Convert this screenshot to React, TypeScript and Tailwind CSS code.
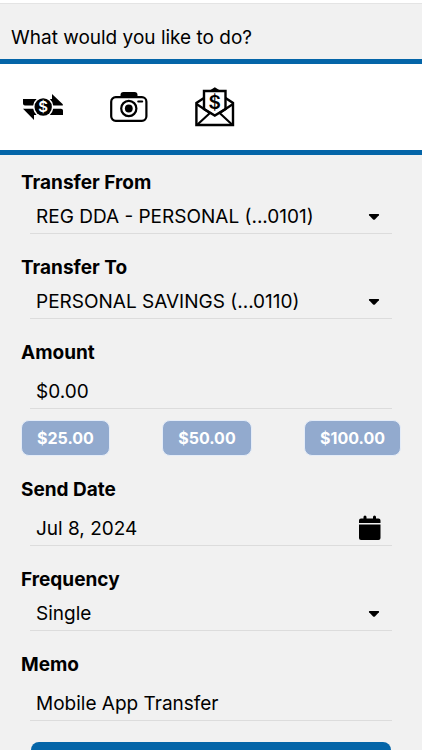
import { useState, type ReactNode } from 'react'

const ACCOUNTS = ['REG DDA - PERSONAL (...0101)', 'PERSONAL SAVINGS (...0110)']
const QUICK_AMOUNTS = ['$25.00', '$50.00', '$100.00']

function TransferIcon() {
  return (
    <svg viewBox="0 0 40 28" className="w-10 h-7" fill="currentColor" aria-hidden="true">
      <path d="M0 6H13.600A10.200 10.200 0 0 0 10.200 12.400H2Q0 12.400 0 10.500Z" />
      <path d="M29 1 39.800 11.200V12.400H30.200A10.200 10.200 0 0 0 26.800 6H29Z" />
      <path d="M0 15.800H10.200A10.200 10.200 0 0 0 13.600 22H11V27Z" />
      <path d="M40 22H26.800A10.200 10.200 0 0 0 30.200 15.800H38Q40 15.800 40 17.600Z" />
      <circle cx="20.200" cy="14" r="8.700" />
      <text x="20.200" y="19.400" textAnchor="middle" fontSize="15" fontWeight="600" fontFamily="Inter, sans-serif" fill="#fff">$</text>
    </svg>
  )
}

function CameraIcon() {
  return (
    <svg viewBox="0 0 38 32" className="w-[38px] h-8" fill="none" stroke="currentColor" aria-hidden="true">
      <path d="M10.500 6V4Q10.500 1 13.500 1H24.500Q27.500 1 27.500 4V6Z" fill="currentColor" stroke="none" />
      <rect x="1.200" y="6.200" width="35.200" height="23.600" rx="4.500" strokeWidth="2.200" />
      <circle cx="18.800" cy="17.500" r="7.600" strokeWidth="2.200" />
      <circle cx="18.800" cy="17.500" r="3.900" fill="currentColor" stroke="none" />
      <path d="M28.200 10.400H32.200" strokeWidth="2" strokeLinecap="round" />
    </svg>
  )
}

function PayBillIcon() {
  return (
    <svg viewBox="0 0 40 40" className="w-10 h-10" fill="none" stroke="currentColor" strokeWidth="2.400" aria-hidden="true">
      <path d="M9 11 1.400 16V38H38V16L30.500 11" />
      <path d="M9 22V4H30.500V22L19.800 28.500Z" />
      <path d="M15.500 3.800 19.800 1.200 24 3.800Z" fill="currentColor" strokeWidth="1.500" />
      <path d="M1.500 17 15 26 2.500 37.500M38 17 24.600 26 37 37.500" strokeWidth="2.200" />
      <text x="19.800" y="22" textAnchor="middle" fontSize="19" fontWeight="600" fontFamily="Inter, sans-serif" fill="currentColor" stroke="none">$</text>
    </svg>
  )
}

function CaretIcon() {
  return (
    <svg viewBox="0 0 12 8" className="w-3 h-2 absolute right-3 top-[13px] pointer-events-none" fill="currentColor" aria-hidden="true">
      <path d="M1.500 1H10.500Q11.600 1.200 10.900 2.300L6.900 6.500Q6 7.200 5.100 6.500L1.100 2.300Q.400 1.200 1.500 1Z" />
    </svg>
  )
}

function CalendarIcon() {
  return (
    <svg viewBox="0 0 24 26" className="w-6 h-[26px]" fill="currentColor" aria-hidden="true">
      <path d="M1 8V5.500Q1 3.500 3 3.500H5.500V2Q5.500 .500 7 .500T8.500 2V3.500H15V2Q15 .500 16.500 .500T18 2V3.500H20.500Q22.500 3.500 22.500 5.500V8Z" />
      <path d="M1 9.500H22.500V23Q22.500 25 20.500 25H3Q1 25 1 23Z" />
    </svg>
  )
}

interface LabelProps {
  htmlFor: string
  children: ReactNode
}

function FieldLabel({ htmlFor, children }: LabelProps) {
  return (
    <label htmlFor={htmlFor} className="block text-[19px] leading-[26px] font-bold">
      {children}
    </label>
  )
}

interface FieldProps {
  id: string
  label: string
  value: string
  onChange: (value: string) => void
}

function SelectField({ id, label, value, onChange, options }: FieldProps & { options: string[] }) {
  return (
    <div>
      <FieldLabel htmlFor={id}>{label}</FieldLabel>
      <div className="relative mt-1 mx-[9px] border-b border-[#dcdcdc]">
        <select
          id={id}
          value={value}
          onChange={(e) => onChange(e.target.value)}
          className="block w-full h-[33px] pt-0.5 pl-1.5 pr-8 appearance-none bg-transparent text-[19px] outline-none"
        >
          {options.map((option) => (
            <option key={option}>{option}</option>
          ))}
        </select>
        <CaretIcon />
      </div>
    </div>
  )
}

function TextField({ id, label, value, onChange, children }: FieldProps & { children?: ReactNode }) {
  return (
    <div>
      <FieldLabel htmlFor={id}>{label}</FieldLabel>
      <div className="flex items-center mt-2 mx-[9px] pr-2.5 border-b border-[#dcdcdc]">
        <input
          id={id}
          type="text"
          value={value}
          onChange={(e) => onChange(e.target.value)}
          className="flex-1 min-w-0 h-[34px] pl-1.5 bg-transparent text-[19px] outline-none"
        />
        {children}
      </div>
    </div>
  )
}

export default function App() {
  const [from, setFrom] = useState(ACCOUNTS[0])
  const [to, setTo] = useState(ACCOUNTS[1])
  const [amount, setAmount] = useState('$0.00')
  const [date, setDate] = useState('Jul 8, 2024')
  const [frequency, setFrequency] = useState('Single')
  const [memo, setMemo] = useState('Mobile App Transfer')

  return (
    <div className="h-screen flex flex-col overflow-hidden bg-[#f1f1f1] text-black font-['Inter','Liberation_Sans',sans-serif]">
      <header className="shrink-0 border-t-3 border-white">
        <h1 className="px-[11px] pt-[21px] pb-2 border-t border-[#e4e4e4] text-[19px] leading-[26px]">
          What would you like to do?
        </h1>
      </header>

      <nav className="shrink-0 flex items-center gap-[47px] h-24 px-[23px] bg-white border-y-5 border-[#0465a8]">
        <button type="button" aria-label="Transfer">
          <TransferIcon />
        </button>
        <button type="button" aria-label="Deposit">
          <CameraIcon />
        </button>
        <button type="button" aria-label="Pay bills">
          <PayBillIcon />
        </button>
      </nav>

      <form
        onSubmit={(e) => e.preventDefault()}
        className="flex-1 min-h-0 overflow-y-auto [scrollbar-width:none] flex flex-col gap-[21px] px-[21px] pt-[15px] pb-6"
      >
        <SelectField id="from" label="Transfer From" value={from} onChange={setFrom} options={ACCOUNTS} />
        <SelectField id="to" label="Transfer To" value={to} onChange={setTo} options={ACCOUNTS} />

        <div>
          <TextField id="amount" label="Amount" value={amount} onChange={setAmount} />
          <div className="flex justify-between mt-[11px]">
            {QUICK_AMOUNTS.map((quick) => (
              <button
                key={quick}
                type="button"
                onClick={() => setAmount(quick)}
                className="h-9 px-[15px] rounded-lg border border-[#e4ecf8] bg-[#92aace] text-white text-base font-bold"
              >
                {quick}
              </button>
            ))}
          </div>
        </div>

        <TextField id="date" label="Send Date" value={date} onChange={setDate}>
          <button type="button" aria-label="Choose date">
            <CalendarIcon />
          </button>
        </TextField>
        <SelectField
          id="frequency"
          label="Frequency"
          value={frequency}
          onChange={setFrequency}
          options={['Single', 'Weekly', 'Monthly']}
        />
        <TextField id="memo" label="Memo" value={memo} onChange={setMemo} />

        <button type="submit" aria-label="Submit" className="shrink-0 h-12 mx-2.5 rounded-lg bg-[#0465a8]" />
      </form>
    </div>
  )
}
